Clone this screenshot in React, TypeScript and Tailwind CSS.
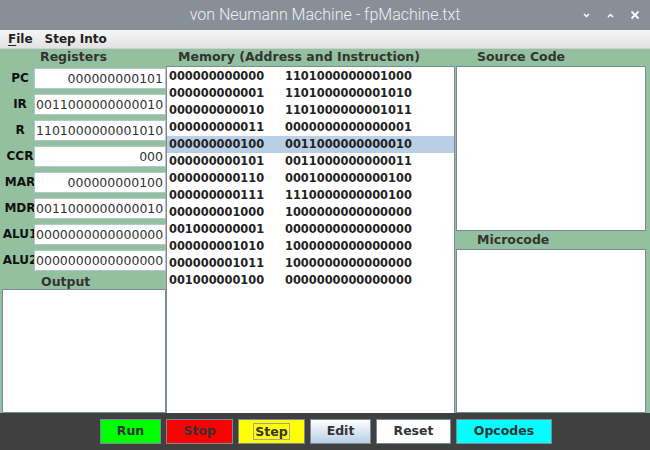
import React from "react";

const registers: { name: string; value: string; align: "left" | "right" }[] = [
  { name: "PC", value: "000000000101", align: "right" },
  { name: "IR", value: "0011000000000010", align: "left" },
  { name: "R", value: "1101000000001010", align: "left" },
  { name: "CCR", value: "000", align: "right" },
  { name: "MAR", value: "000000000100", align: "right" },
  { name: "MDR", value: "0011000000000010", align: "left" },
  { name: "ALU1", value: "0000000000000000", align: "left" },
  { name: "ALU2", value: "0000000000000000", align: "left" },
];

const memory: [string, string][] = [
  ["000000000000", "1101000000001000"],
  ["000000000001", "1101000000001010"],
  ["000000000010", "1101000000001011"],
  ["000000000011", "0000000000000001"],
  ["000000000100", "0011000000000010"],
  ["000000000101", "0011000000000011"],
  ["000000000110", "0001000000000100"],
  ["000000000111", "1110000000000100"],
  ["000000001000", "1000000000000000"],
  ["001000000001", "0000000000000000"],
  ["000000001010", "1000000000000000"],
  ["000000001011", "1000000000000000"],
  ["001000000100", "0000000000000000"],
];

const dialog = { fontFamily: '"DejaVu Sans", sans-serif' };

function Header({ title, pad }: { title: string; pad: string }) {
  return (
    <div className={`h-[17px] flex items-center text-[12.5px] font-bold text-[#333] ${pad}`}>
      {title}
    </div>
  );
}

function Button({ label, className, focus }: { label: string; className: string; focus?: boolean }) {
  return (
    <div
      className={`h-[25px] flex items-center justify-center border border-[#7a8a99] text-[12.5px] font-bold text-[#333] ${className}`}
    >
      <span className={focus ? "border border-[#99a3b5] px-px leading-[15px]" : ""}>{label}</span>
    </div>
  );
}

export default function App() {
  return (
    <div className="w-[650px] h-[450px] overflow-hidden bg-[#93c19f]" style={dialog}>
      {/* title bar */}
      <div className="h-[30px] bg-[#888f97] relative flex items-center justify-center">
        <span
          className="text-[16px] font-light text-[#eef0f2]"
          style={{ fontFamily: "Roboto, sans-serif" }}
        >
          von Neumann Machine - fpMachine.txt
        </span>
        <div className="absolute right-[10px] top-0 h-[30px] flex items-center gap-[15px] text-white">
          <svg width="9" height="9" viewBox="0 0 9 9">
            <path d="M2 3 L4.5 5.5 L7 3" stroke="white" strokeWidth="1.5" fill="none" />
          </svg>
          <svg width="9" height="9" viewBox="0 0 9 9">
            <path d="M2 6 L4.5 3.5 L7 6" stroke="white" strokeWidth="1.5" fill="none" />
          </svg>
          <svg width="10" height="10" viewBox="0 0 10 10">
            <path d="M1.5 1.5 L8.5 8.5 M8.5 1.5 L1.5 8.5" stroke="white" strokeWidth="1.8" fill="none" />
          </svg>
        </div>
      </div>

      {/* menu bar */}
      <div className="h-[19px] bg-gradient-to-b from-[#f6f6f6] to-[#e2e2e2] border-b border-[#d0d0d0] flex items-center gap-[12px] pl-[8px] text-[12px] font-bold text-[#222]">
        <span>
          <span className="underline underline-offset-2">F</span>ile
        </span>
        <span>Step Into</span>
      </div>

      {/* main area */}
      <div className="h-[364px] flex">
        {/* left column */}
        <div className="w-[166px] flex flex-col">
          <Header title="Registers" pad="pl-[40px]" />
          {registers.map((r) => (
            <div key={r.name} className="h-[26px] flex items-start pt-[2px]">
              <div className="w-[34px] shrink-0 pl-[6px] flex justify-center overflow-hidden text-[12px] font-bold text-[#111] whitespace-nowrap leading-[21px]">
                <span className="shrink-0">{r.name}</span>
              </div>
              <div
                className={`w-[132px] h-[21px] bg-white border border-[#b5c3d3] overflow-hidden whitespace-nowrap text-[12.5px] text-[#333] leading-[19px] ${
                  r.align === "right" ? "text-right pr-[2px]" : "text-left pl-px"
                } ${r.name.startsWith("ALU") ? "pl-0" : ""}`}
              >
                {r.value}
              </div>
            </div>
          ))}
          <div className="h-[15px] flex items-center text-[12.5px] font-bold text-[#333] pl-[41px] pt-[2px]">
            Output
          </div>
          <div className="ml-[2px] h-[124px] bg-white border border-[#7a8a99]" />
        </div>

        {/* memory column */}
        <div className="w-[289px] flex flex-col">
          <Header title="Memory (Address and Instruction)" pad="pl-[12px]" />
          <div className="flex-1 bg-white border border-[#7a8a99] border-b-0 pt-px">
            {memory.map(([addr, ins], i) => (
              <div
                key={i}
                className={`h-[17px] flex items-center text-[11.4px] font-bold text-[#222] ${
                  i === 4 ? "bg-[#b8cfe5]" : ""
                }`}
              >
                <span className="pl-[2px] w-[118px]">{addr}</span>
                <span>{ins}</span>
              </div>
            ))}
          </div>
        </div>

        {/* right column */}
        <div className="flex-1 flex flex-col pl-px pr-[4px]">
          <Header title="Source Code" pad="pl-[21px]" />
          <div className="h-[165px] bg-white border border-[#7a8a99]" />
          <div className="h-[17px] mt-px flex items-center text-[12.5px] font-bold text-[#333] pl-[21px]">
            Microcode
          </div>
          <div className="h-[164px] bg-white border border-[#7a8a99]" />
        </div>
      </div>

      {/* bottom bar */}
      <div className="h-[37px] bg-[#404040] flex items-start pt-[6px] pl-[100px] gap-[5px]">
        <Button label="Run" className="w-[61px] bg-[#00ff00]" />
        <Button label="Stop" className="w-[67px] bg-[#ff0000]" />
        <Button label="Step" className="w-[67px] bg-[#ffff00]" focus />
        <Button label="Edit" className="w-[61px] bg-gradient-to-b from-white to-[#b8cfe5]" />
        <Button label="Reset" className="w-[75px] bg-white" />
        <Button label="Opcodes" className="w-[96px] bg-[#00ffff]" />
      </div>
    </div>
  );
}
